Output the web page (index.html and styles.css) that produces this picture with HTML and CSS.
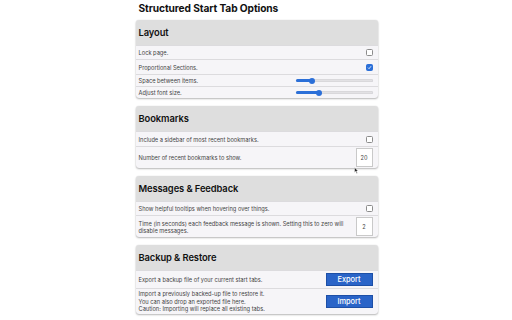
FILE: index.html
```html
<!DOCTYPE html>
<html lang="en">
<head>
<meta charset="utf-8">
<title>Structured Start Tab Options</title>
<link rel="stylesheet" href="styles.css">
</head>
<body>
<main class="page">
  <h1 class="title">Structured Start Tab Options</h1>

  <section class="card">
    <h2 class="card-head">Layout</h2>
    <div class="row row-check">
      <span class="label">Lock page.</span>
      <span class="checkbox"></span>
    </div>
    <div class="row row-check2">
      <span class="label">Proportional Sections.</span>
      <span class="checkbox checked"><svg viewBox="0 0 8 8" class="tick"><path d="M1.6 4.2 L3.3 5.9 L6.5 1.9" /></svg></span>
    </div>
    <div class="row row-slider">
      <span class="label">Space between items.</span>
      <span class="slider"><span class="fill" style="width:22%"></span><span class="thumb" style="left:22%"></span></span>
    </div>
    <div class="row row-slider">
      <span class="label">Adjust font size.</span>
      <span class="slider"><span class="fill" style="width:31%"></span><span class="thumb" style="left:31%"></span></span>
    </div>
  </section>

  <section class="card">
    <h2 class="card-head">Bookmarks</h2>
    <div class="row row-check2">
      <span class="label">Include a sidebar of most recent bookmarks.</span>
      <span class="checkbox"></span>
    </div>
    <div class="row row-number">
      <span class="label">Number of recent bookmarks to show.</span>
      <span class="number">20</span>
    </div>
  </section>

  <section class="card">
    <h2 class="card-head">Messages &amp; Feedback</h2>
    <div class="row row-check">
      <span class="label">Show helpful tooltips when hovering over things.</span>
      <span class="checkbox"></span>
    </div>
    <div class="row row-number">
      <span class="label wrap">Time (in seconds) each feedback message is shown. Setting this to zero will disable messages.</span>
      <span class="number">2</span>
    </div>
  </section>

  <section class="card">
    <h2 class="card-head">Backup &amp; Restore</h2>
    <div class="row row-button">
      <span class="label">Export a backup file of your current start tabs.</span>
      <span class="button">Export</span>
    </div>
    <div class="row row-import">
      <span class="label lines">Import a previously backed-up file to restore it.<br>You can also drop an exported file here.<br>Caution: Importing will replace all existing tabs.</span>
      <span class="button">Import</span>
    </div>
  </section>
</main>
<svg class="cursor" viewBox="0 0 6 9"><path d="M0.5 0.5 L0.5 7 L2 5.6 L3.2 8.2 L4.2 7.7 L3 5.2 L5 5.1 Z"/></svg>
</body>
</html>
```

FILE: styles.css
```css
html, body {
  margin: 0;
  padding: 0;
  background: #ffffff;
}

body {
  font-family: Inter, "Liberation Sans", sans-serif;
  color: #222;
  width: 512px;
  height: 320px;
  overflow: hidden;
  position: relative;
}

.page {
  width: 242px;
  margin: 0 auto;
  padding-left: 1px;
  display: flex;
  flex-direction: column;
  gap: 8px;
}

.title {
  margin: 0 0 -4px 0;
  padding-left: 3px;
  font-size: 10.2px;
  line-height: 16px;
  font-weight: 700;
  color: #111;
  letter-spacing: -0.1px;
}

.card {
  background: #f6f5f8;
  border-radius: 3px;
  box-shadow: 0 1px 2px rgba(0, 0, 0, 0.28), 0 0 1px rgba(0, 0, 0, 0.18);
  overflow: hidden;
}

.card-head {
  margin: 0;
  height: 25px;
  display: flex;
  align-items: center;
  padding-left: 3px;
  background: #dedede;
  font-size: 9.4px;
  font-weight: 600;
  color: #111;
  letter-spacing: -0.1px;
}

.row {
  display: flex;
  align-items: center;
  justify-content: space-between;
  border-top: 1px solid #dcdbde;
  padding: 0 5px 0 3px;
  box-sizing: border-box;
}

.row-check { height: 14px; }
.row-check2 { height: 15px; }
.row-slider { height: 12px; }
.row-number { height: 22px; }
.row-button { height: 18px; }
.row-import { height: 26px; }

.label {
  font-size: 5.7px;
  line-height: 7px;
  color: #444;
}

.label.wrap {
  width: 205px;
}

.label.lines {
  line-height: 7.5px;
}

.checkbox {
  width: 7px;
  height: 7px;
  box-sizing: border-box;
  border: 1px solid #8c8c8c;
  border-radius: 1.5px;
  background: #fff;
  display: flex;
}

.checkbox.checked {
  background: #2b6fd8;
  border-color: #2b6fd8;
}

.tick {
  width: 100%;
  height: 100%;
  fill: none;
  stroke: #fff;
  stroke-width: 1.3;
}

.slider {
  position: relative;
  width: 77px;
  height: 3px;
  border-radius: 2px;
  background: #e2e1e4;
  box-shadow: inset 0 0 0 0.5px #cfcfd2;
}

.fill {
  position: absolute;
  left: 0;
  top: 0;
  height: 3px;
  border-radius: 2px;
  background: #2b6fd8;
}

.thumb {
  position: absolute;
  top: -1.5px;
  width: 6px;
  height: 6px;
  margin-left: -3px;
  border-radius: 50%;
  background: #2b6fd8;
}

.number {
  width: 17px;
  height: 19px;
  box-sizing: border-box;
  border: 1px solid #c9c9c9;
  background: #fff;
  display: flex;
  align-items: center;
  justify-content: center;
  font-size: 5.6px;
  color: #444;
}

.button {
  width: 47px;
  height: 13px;
  box-sizing: border-box;
  background: #2a64c8;
  border: 1px solid #1d4fa6;
  display: flex;
  align-items: center;
  justify-content: center;
  color: #fff;
  font-size: 7.4px;
  font-weight: 500;
}

.cursor {
  position: absolute;
  left: 354px;
  top: 167px;
  width: 5px;
  height: 7px;
  fill: #222;
  stroke: #fff;
  stroke-width: 0.6;
}
```
